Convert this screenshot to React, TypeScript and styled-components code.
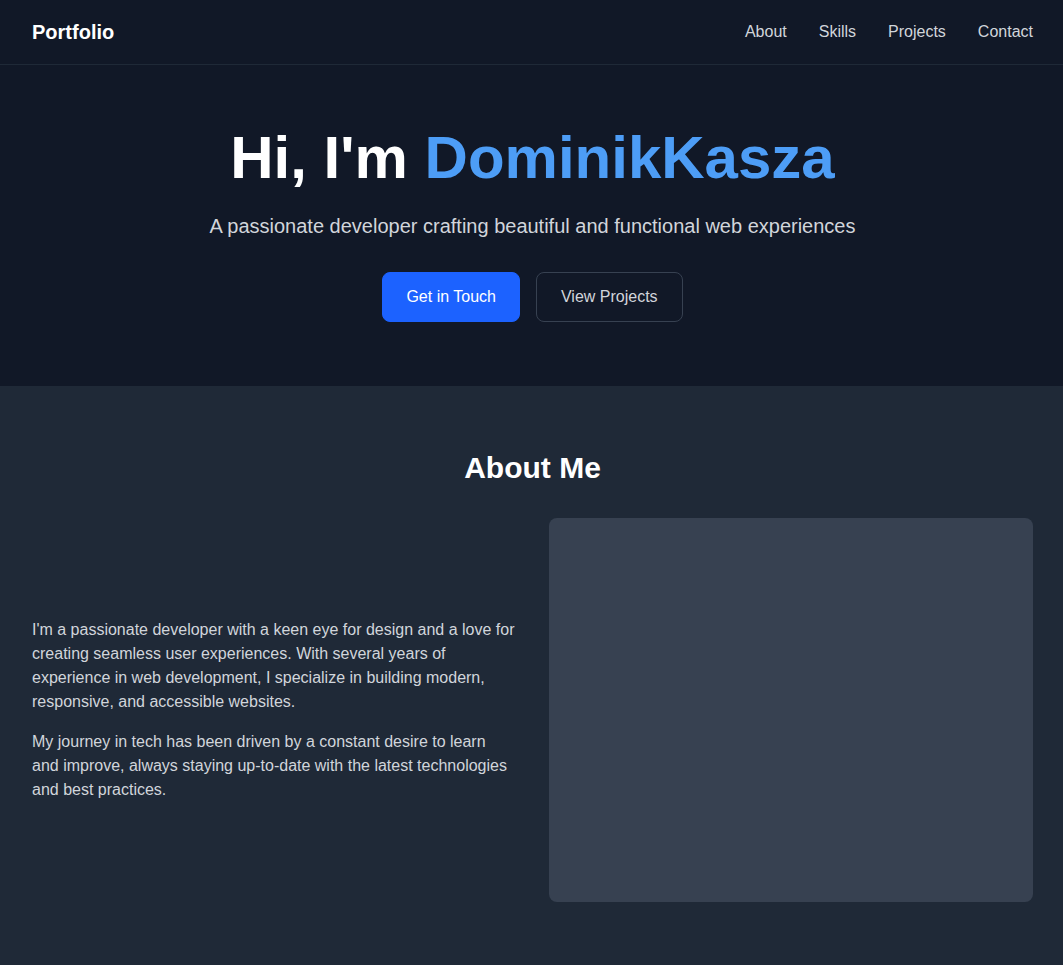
import React from "react";
import styled, { createGlobalStyle } from "styled-components";

const Global = createGlobalStyle`
  html, body {
    margin: 0;
    padding: 0;
    background: #1f2937;
    font-family: "Liberation Sans", Arial, sans-serif;
    -webkit-font-smoothing: antialiased;
  }
  * { box-sizing: border-box; }
`;

const Nav = styled.nav`
  height: 65px;
  background: #111827;
  border-bottom: 1px solid #1f2937;
  display: flex;
  align-items: center;
  justify-content: space-between;
  padding: 0 30px 1px 32px;
`;

const Brand = styled.div`
  color: #ffffff;
  font-size: 20px;
  font-weight: 700;
  line-height: 28px;
`;

const NavLinks = styled.div`
  display: flex;
  gap: 32px;
`;

const NavLink = styled.a`
  color: #d1d5db;
  font-size: 16px;
  line-height: 24px;
  text-decoration: none;
`;

const Hero = styled.section`
  background: #111827;
  padding: 63px 30px 64px 32px;
  display: flex;
  flex-direction: column;
  align-items: center;
  text-align: center;
`;

const Title = styled.h1`
  margin: 0 0 24px;
  font-size: 60px;
  line-height: 60px;
  font-weight: 700;
  color: #ffffff;
`;

const Accent = styled.span`
  color: #4d9df6;
`;

const Subtitle = styled.p`
  margin: 0 0 32px;
  font-size: 20px;
  line-height: 28px;
  color: #d1d5db;
`;

const Buttons = styled.div`
  display: flex;
  gap: 16px;
`;

const Button = styled.a<{ $primary?: boolean }>`
  display: inline-flex;
  align-items: center;
  justify-content: center;
  height: 50px;
  padding: 0 ${(p) => (p.$primary ? "23px" : "24px")};
  border-radius: 8px;
  font-size: 16px;
  text-decoration: none;
  color: ${(p) => (p.$primary ? "#ffffff" : "#d1d5db")};
  background: ${(p) => (p.$primary ? "#1c62ff" : "transparent")};
  border: 1px solid ${(p) => (p.$primary ? "#1c62ff" : "#374151")};
`;

const About = styled.section`
  background: #1f2937;
  padding: 64px 30px 64px 32px;
`;

const SectionTitle = styled.h2`
  margin: 0 0 32px;
  text-align: center;
  font-size: 30px;
  line-height: 36px;
  font-weight: 700;
  color: #ffffff;
`;

const Grid = styled.div`
  display: grid;
  grid-template-columns: 1fr 1fr;
  gap: 32px;
  align-items: center;
`;

const TextCol = styled.div`
  display: flex;
  flex-direction: column;
  gap: 16px;
`;

const Para = styled.p`
  margin: 0;
  font-size: 16px;
  line-height: 24px;
  color: #d1d5db;
`;

const ImageBox = styled.div`
  height: 384px;
  background: #374151;
  border-radius: 8px;
`;

export default function App() {
  return (
    <>
      <Global />
      <Nav>
        <Brand>Portfolio</Brand>
        <NavLinks>
          <NavLink href="#about">About</NavLink>
          <NavLink href="#skills">Skills</NavLink>
          <NavLink href="#projects">Projects</NavLink>
          <NavLink href="#contact">Contact</NavLink>
        </NavLinks>
      </Nav>
      <Hero>
        <Title>
          Hi, I'm <Accent>DominikKasza</Accent>
        </Title>
        <Subtitle>A passionate developer crafting beautiful and functional web experiences</Subtitle>
        <Buttons>
          <Button $primary href="#contact">Get in Touch</Button>
          <Button href="#projects">View Projects</Button>
        </Buttons>
      </Hero>
      <About>
        <SectionTitle>About Me</SectionTitle>
        <Grid>
          <TextCol>
            <Para>
              I'm a passionate developer with a keen eye for design and a love for creating seamless user
              experiences. With several years of experience in web development, I specialize in building
              modern, responsive, and accessible websites.
            </Para>
            <Para>
              My journey in tech has been driven by a constant desire to learn and improve, always staying
              up-to-date with the latest technologies and best practices.
            </Para>
          </TextCol>
          <ImageBox />
        </Grid>
      </About>
    </>
  );
}
